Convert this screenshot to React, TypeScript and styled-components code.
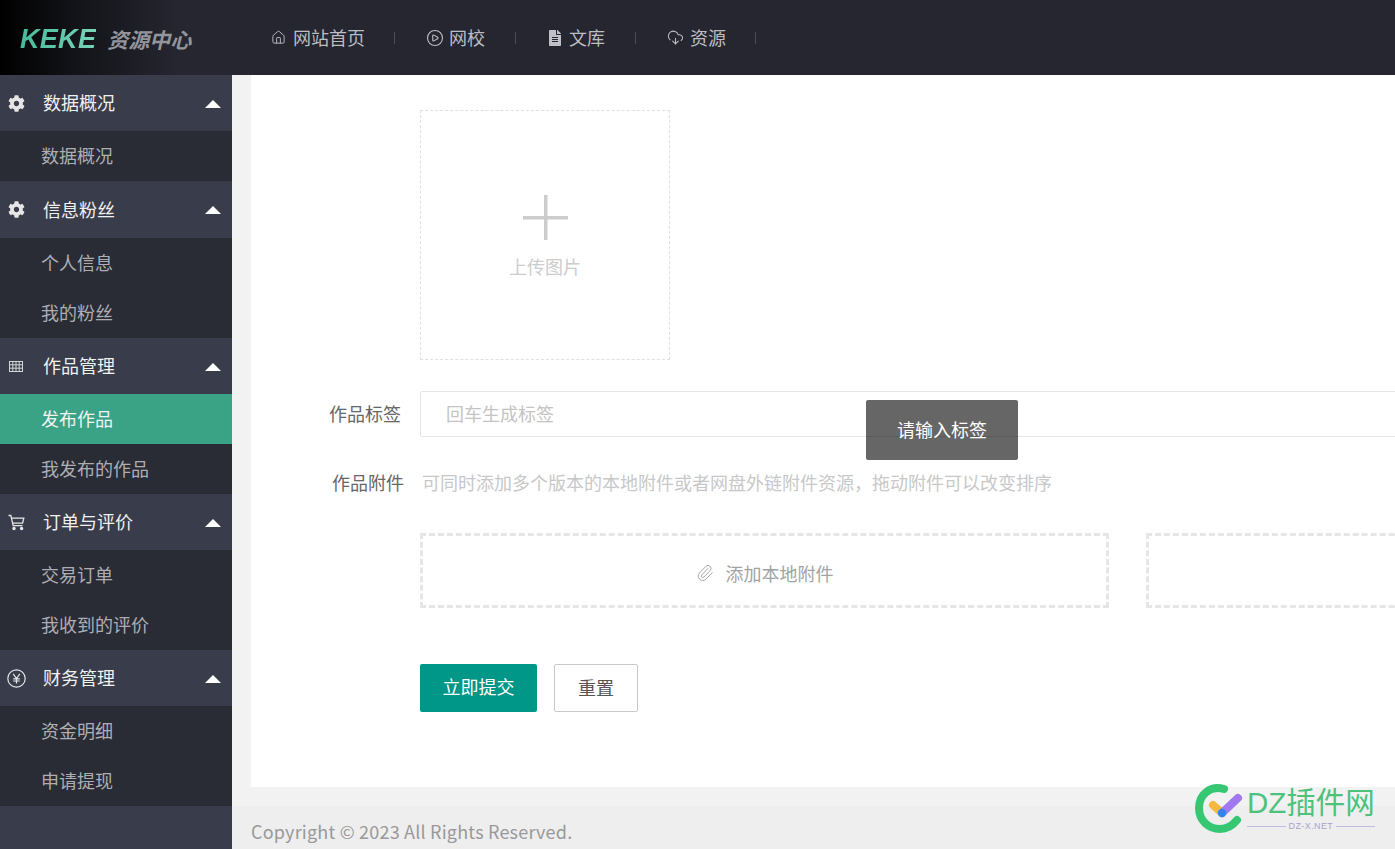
import * as React from "react";
import styled, { createGlobalStyle } from "styled-components";
import { FaCog, FaFileAlt } from "react-icons/fa";
import { CirclePlay, CloudDownload, House, Paperclip } from "lucide-react";

const FONT = '"Noto Sans CJK SC", "Noto Sans", "Liberation Sans", sans-serif';

const GlobalStyle = createGlobalStyle`
  html, body {
    margin: 0;
    height: 100%;
    overflow: hidden;
    font-family: ${FONT};
    background: #f2f2f2;
  }
  * { box-sizing: border-box; }
`;

const Page = styled.div`
  display: grid;
  grid-template-columns: 232px 1fr;
  grid-template-rows: 75px 774px;
  width: 1395px;
  height: 849px;
  overflow: hidden;
`;

const Logo = styled.div`
  display: flex;
  align-items: center;
  padding: 3px 0 0 20px;
  gap: 11px;
  background: linear-gradient(90deg, #000 0%, #14151a 35%, #252630 78%, #252630 100%);
`;

const LogoMark = styled.span`
  font-family: "Liberation Sans", sans-serif;
  font-size: 27px;
  font-weight: 700;
  font-style: italic;
  line-height: 1;
  letter-spacing: 0.3px;
  color: transparent;
  background: linear-gradient(90deg, #45bb9b 0%, #7ad4b6 100%);
  background-clip: text;
`;

const LogoText = styled.span`
  font-size: 21px;
  font-weight: 700;
  font-style: italic;
  line-height: 1;
  color: #94959c;
`;

const TopBar = styled.nav`
  display: flex;
  align-items: center;
  padding: 0 0 2px 39px;
  background: #252630;
`;

const NavItem = styled.a<{ $gap?: number; $tail?: number }>`
  position: relative;
  display: flex;
  align-items: center;
  gap: ${(p) => p.$gap ?? 7}px;
  height: 24px;
  margin-right: 31px;
  padding-right: ${(p) => p.$tail ?? 30}px;
  font-size: 18px;
  line-height: 24px;
  color: #bdbdc2;

  &::after {
    content: "";
    position: absolute;
    right: 0;
    top: 7px;
    width: 1px;
    height: 12px;
    background: #4a4c56;
  }

  svg {
    flex: none;
    margin-top: 2px;
  }
`;

const Sidebar = styled.aside`
  background: #393c4a;
`;

const Group = styled.div`
  &:nth-child(2) > div:first-child {
    height: 57px;
  }
`;

const GroupHead = styled.div`
  position: relative;
  display: flex;
  align-items: center;
  height: 56px;
  padding: 0 0 2px 43px;
  font-size: 18px;
  color: #f0f0f0;
  background: #393c4a;
`;

const GroupIcon = styled.span`
  position: absolute;
  left: 0;
  top: 0;
  display: flex;
  align-items: center;
  justify-content: center;
  width: 32px;
  height: 56px;
  color: #e6e6e6;
`;

const Caret = styled.i`
  position: absolute;
  right: 11px;
  top: 25px;
  border-left: 8px solid transparent;
  border-right: 8px solid transparent;
  border-bottom: 8px solid #fff;
`;

const SubItem = styled.div<{ $active?: boolean }>`
  display: flex;
  align-items: center;
  height: 50px;
  padding: 0 0 2px 41px;
  font-size: 18px;
  color: ${(p) => (p.$active ? "#f2f2f2" : "#aeaeb2")};
  background: ${(p) => (p.$active ? "#3aa386" : "#292b35")};
`;

const Main = styled.main`
  display: flex;
  flex-direction: column;
  padding-left: 19px;
  background: #f2f2f2;
  overflow: hidden;
`;

const Card = styled.section`
  flex: none;
  height: 712px;
  padding-top: 35px;
  background: #fff;
`;

const FormRow = styled.div<{ $gap?: number }>`
  display: grid;
  grid-template-columns: 169px 1fr;
  align-items: center;
  margin-bottom: ${(p) => p.$gap ?? 0}px;
`;

const FieldLabel = styled.label<{ $pad?: number }>`
  padding: 0 ${(p) => p.$pad ?? 19}px 2px 0;
  text-align: right;
  font-size: 18px;
  line-height: 24px;
  color: #666;
`;

const Upload = styled.div`
  display: flex;
  flex-direction: column;
  align-items: center;
  width: 250px;
  height: 250px;
  padding-top: 84px;
  border: 1px dashed #e0e0e0;
  color: #cccccc;
`;

const UploadText = styled.span`
  margin-top: 14px;
  font-size: 18px;
  line-height: 24px;
  color: #cccccc;
`;

const TagInput = styled.div`
  display: flex;
  align-items: center;
  height: 46px;
  width: calc(100% + 20px);
  padding: 0 0 2px 25px;
  border: 1px solid #e6e6e6;
  border-radius: 2px;
  font-size: 18px;
  color: #c4c4c4;
`;

const Hint = styled.span`
  padding: 0 0 2px 2px;
  font-size: 18px;
  line-height: 24px;
  white-space: nowrap;
  color: #c8c8c8;
`;

const AttachRow = styled.div`
  display: flex;
  gap: 37px;
  width: 1500px;
  margin-left: 169px;
`;

const AttachBox = styled.div`
  flex: none;
  display: flex;
  align-items: center;
  justify-content: center;
  gap: 12px;
  width: 689px;
  height: 75px;
  padding-top: 4px;
  border: 3px dashed #e6e6e6;
  font-size: 18px;
  color: #a3a3a3;
`;

const Buttons = styled.div`
  display: flex;
  gap: 17px;
  margin: 56px 0 0 169px;
`;

const Submit = styled.button`
  width: 117px;
  height: 48px;
  padding: 0 0 4px;
  border: 0;
  border-radius: 2px;
  font: 18px ${FONT};
  color: #fff;
  background: #009688;
`;

const Reset = styled.button`
  width: 84px;
  height: 48px;
  padding: 0 0 2px;
  border: 1px solid #c9c9c9;
  border-radius: 2px;
  font: 18px ${FONT};
  color: #555;
  background: #fff;
`;

const Footer = styled.footer`
  flex: none;
  height: 43px;
  margin: 19px 0 0 -19px;
  padding: 13px 0 0 19px;
  font-size: 18px;
  line-height: 24px;
  letter-spacing: 0.2px;
  color: #999;
  background: #eeeeee;
`;

const Toast = styled.div`
  position: absolute;
  left: 866px;
  top: 400px;
  display: flex;
  align-items: center;
  justify-content: center;
  width: 152px;
  height: 60px;
  padding-bottom: 2px;
  border-radius: 2px;
  font-size: 18px;
  color: #fff;
  background: rgba(0, 0, 0, 0.6);
`;

const Watermark = styled.div`
  position: absolute;
  left: 1194px;
  top: 783px;
  display: flex;
  gap: 1px;
`;

const MarkText = styled.div`
  display: flex;
  flex-direction: column;
  padding-top: 4px;
`;

const MarkTitle = styled.span`
  font-family: "Liberation Sans", "Noto Sans CJK SC", sans-serif;
  font-size: 29.5px;
  line-height: 32px;
  white-space: nowrap;
  color: #4cc27c;
`;

const MarkSub = styled.span`
  display: flex;
  align-items: center;
  gap: 3px;
  margin-top: 1px;
  font-family: "Liberation Sans", sans-serif;
  font-size: 9px;
  line-height: 12px;
  letter-spacing: 0.4px;
  white-space: nowrap;
  color: #a9a3c8;

  &::before,
  &::after {
    content: "";
    flex: 1;
    height: 1px;
    background: #c5b8e2;
  }
`;

const YenIcon = () => (
  <svg width="19" height="19" viewBox="0 0 19 19" fill="none" stroke="currentColor" strokeWidth="1.2">
    <circle cx="9.5" cy="9.5" r="8.7" />
    <path d="M6.2 4.8 9.5 9.5l3.3-4.7M9.5 9.5v5M6.2 9.8h6.6M6.2 12h6.6" />
  </svg>
);

const TableIcon = () => (
  <svg width="14" height="11" viewBox="0 0 14 11" fill="none" stroke="#d6d6d6" strokeWidth="1">
    <rect x="0.5" y="0.5" width="13" height="10" />
    <path d="M0 3.8h14M0 7.2h14M3.8 0v11M7 0v11M10.2 0v11" />
  </svg>
);

const CartIcon = () => (
  <svg width="17" height="17" viewBox="0 0 17 17" fill="none" stroke="currentColor" strokeWidth="1.3">
    <path d="M0.5 1.5h2.3l2.4 10.2h9.3" />
    <path d="M3.4 4.2h12.4l-1.2 5H4.6" />
    <circle cx="6" cy="14.6" r="1.1" fill="currentColor" />
    <circle cx="13.6" cy="14.6" r="1.1" fill="currentColor" />
  </svg>
);

const PlusIcon = () => (
  <svg width="45" height="45" viewBox="0 0 45 45" fill="currentColor">
    <rect x="0" y="21" width="45" height="3.5" />
    <rect x="21" y="0" width="3.5" height="45" />
  </svg>
);

const DzLogo = () => (
  <svg width="52" height="52" viewBox="0 0 52 52" fill="none">
    <path d="M30 6C16 2 5 12 5 25c0 13 10 21 21 21 7 0 13-4 17-9" stroke="#35c772" strokeWidth="8" strokeLinecap="round" />
    <path d="M19 22l9 8" stroke="#f5b942" strokeWidth="8" strokeLinecap="round" />
    <path d="M28 30l16-15" stroke="#a178f0" strokeWidth="8" strokeLinecap="round" />
    <circle cx="28" cy="30" r="4.2" fill="#2f86f0" />
  </svg>
);

const menu = [
  { title: "数据概况", icon: <FaCog size={17} />, items: ["数据概况"] },
  { title: "信息粉丝", icon: <FaCog size={17} />, items: ["个人信息", "我的粉丝"] },
  { title: "作品管理", icon: <TableIcon />, items: ["发布作品", "我发布的作品"] },
  { title: "订单与评价", icon: <CartIcon />, items: ["交易订单", "我收到的评价"] },
  { title: "财务管理", icon: <YenIcon />, items: ["资金明细", "申请提现"] },
];

export default function App() {
  return (
    <>
      <GlobalStyle />
      <Page>
        <Logo>
          <LogoMark>KEKE</LogoMark>
          <LogoText>资源中心</LogoText>
        </Logo>
        <TopBar>
          <NavItem><House size={15} strokeWidth={1.5} />网站首页</NavItem>
          <NavItem $gap={5} $tail={31}><CirclePlay size={18} strokeWidth={1.5} />网校</NavItem>
          <NavItem $gap={6} $tail={31}><FaFileAlt size={16} color="#c0c0c8" />文库</NavItem>
          <NavItem $gap={6}><CloudDownload size={17} strokeWidth={1.5} />资源</NavItem>
        </TopBar>
        <Sidebar>
          {menu.map((group) => (
            <Group key={group.title}>
              <GroupHead>
                <GroupIcon>{group.icon}</GroupIcon>
                {group.title}
                <Caret />
              </GroupHead>
              {group.items.map((item) => (
                <SubItem key={item} $active={item === "发布作品"}>{item}</SubItem>
              ))}
            </Group>
          ))}
        </Sidebar>
        <Main>
          <Card>
            <FormRow $gap={31}>
              <span />
              <Upload>
                <PlusIcon />
                <UploadText>上传图片</UploadText>
              </Upload>
            </FormRow>
            <FormRow $gap={33}>
              <FieldLabel>作品标签</FieldLabel>
              <TagInput>回车生成标签</TagInput>
            </FormRow>
            <FormRow $gap={37}>
              <FieldLabel $pad={16}>作品附件</FieldLabel>
              <Hint>可同时添加多个版本的本地附件或者网盘外链附件资源，拖动附件可以改变排序</Hint>
            </FormRow>
            <AttachRow>
              <AttachBox>
                <Paperclip size={18} strokeWidth={1.3} />
                添加本地附件
              </AttachBox>
              <AttachBox />
            </AttachRow>
            <Buttons>
              <Submit>立即提交</Submit>
              <Reset>重置</Reset>
            </Buttons>
          </Card>
          <Footer>Copyright © 2023 All Rights Reserved.</Footer>
        </Main>
      </Page>
      <Toast>请输入标签</Toast>
      <Watermark>
        <DzLogo />
        <MarkText>
          <MarkTitle>DZ插件网</MarkTitle>
          <MarkSub>DZ-X.NET</MarkSub>
        </MarkText>
      </Watermark>
    </>
  );
}
